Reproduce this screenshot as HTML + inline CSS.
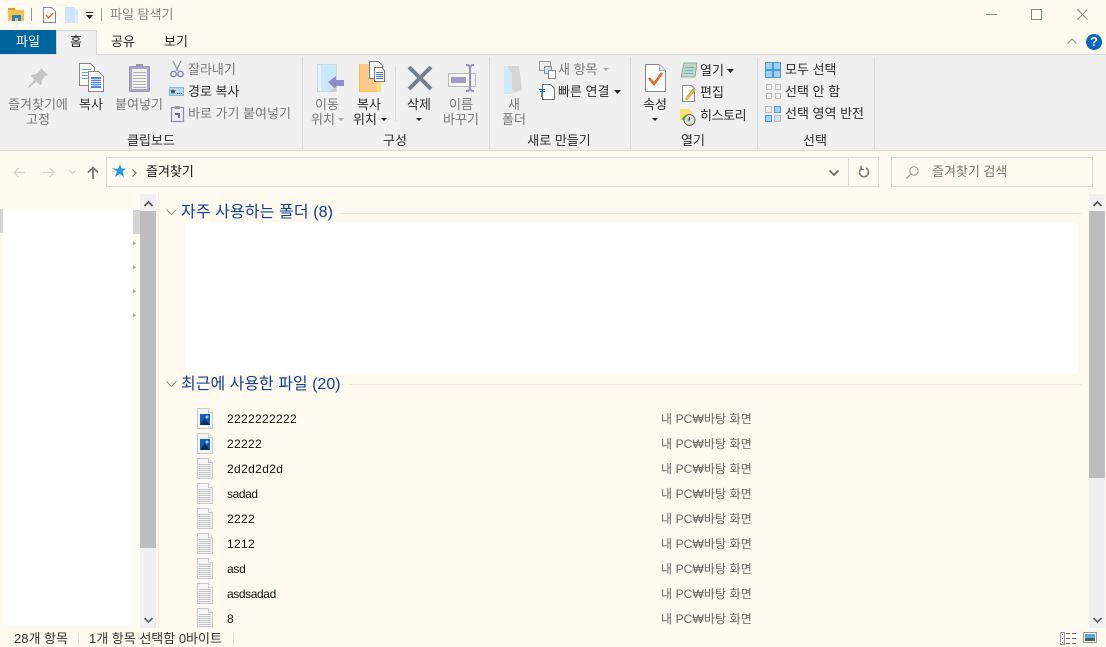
<!DOCTYPE html>
<html lang="ko"><head><meta charset="utf-8"><title>파일 탐색기</title>
<style>
html,body{margin:0;padding:0}
body{width:1106px;height:646px;overflow:hidden;background:#fffaf0;position:relative;font-family:"Liberation Sans","Noto Sans CJK KR",sans-serif;font-size:13px;color:#333}
.a{position:absolute}
.t{position:absolute;white-space:nowrap;line-height:16px;height:16px;margin-top:1px}
.c{text-align:center;transform:translateX(-50%)}
.g{color:#777}
.k{color:#2c2c2c}
svg{position:absolute;overflow:visible}
.h{position:absolute;white-space:nowrap;font-size:16px;line-height:20px;color:#0f3f9c;letter-spacing:.1px}
.f{position:absolute;left:227px;font-size:12px;line-height:16px;color:#111}
.l{position:absolute;left:661px;font-size:12px;line-height:16px;color:#666;white-space:nowrap;letter-spacing:.1px}
</style></head><body>

<!-- title bar -->
<svg style="left:8px;top:7px" width="17" height="15" viewBox="0 0 17 15"><path d="M0 1h7l1 2h8v11H0z" fill="#f5c04e"/><path d="M0 1h7v2H0z" fill="#c9a33a"/><path d="M4 14V8h9v6h-3v-3H7v3z" fill="#1c86c8"/></svg>
<div class="a" style="left:31px;top:8px;width:1px;height:13px;background:#999"></div>
<svg style="left:43px;top:7px" width="13" height="16" viewBox="0 0 13 16"><path d="M.5.5h8l4 4v11H.5z" fill="#fff" stroke="#8a8a8a"/><path d="M3 8l2.5 3L10 6" fill="none" stroke="#e8642a" stroke-width="1.5"/></svg>
<svg style="left:65px;top:7px" width="13" height="16" viewBox="0 0 13 16"><path d="M0 0h9l4 4v12H0z" fill="#cde6fb"/><path d="M10 8h3v8h-3z" fill="#e4eef6"/></svg>
<svg style="left:85px;top:12px" width="9" height="8" viewBox="0 0 9 8"><path d="M1 0h7v1H1z" fill="#222"/><path d="M1 3h7L4.5 7z" fill="#222"/></svg>
<div class="a" style="left:101px;top:8px;width:1px;height:13px;background:#999"></div>
<div class="t" style="left:110px;top:6px;color:#888">파일 탐색기</div>
<div class="a" style="left:986px;top:14px;width:11px;height:1px;background:#888"></div>
<div class="a" style="left:1031px;top:9px;width:9px;height:9px;border:1px solid #888"></div>
<svg style="left:1077px;top:9px" width="11" height="11" viewBox="0 0 11 11"><path d="M.5.5l10 10M10.500.5l-10 10" stroke="#888" fill="none"/></svg>

<!-- tabs -->
<div class="a" style="left:0;top:30px;width:56px;height:24px;background:#00659c"></div>
<div class="t c" style="left:28px;top:33px;color:#fff">파일</div>
<div class="a" style="left:56px;top:30px;width:39px;height:24px;background:#f0f0f0;border:1px solid #d8d8d8;border-bottom:0;box-sizing:content-box"></div>
<div class="t c" style="left:76px;top:33px;color:#222">홈</div>
<div class="t c" style="left:123px;top:33px;color:#222">공유</div>
<div class="t c" style="left:176px;top:33px;color:#222">보기</div>
<svg style="left:1067px;top:38px" width="10" height="6" viewBox="0 0 10 6"><path d="M.5 5.5L5 1l4.500 4.500" stroke="#999" fill="none" stroke-width="1.200"/></svg>
<div class="a" style="left:1086px;top:34px;width:16px;height:16px;border-radius:50%;background:#0a64c2;color:#fff;font:bold 13px/16px 'Liberation Sans',sans-serif;text-align:center">?</div>

<!-- ribbon -->
<div class="a" style="left:0;top:54px;width:1106px;height:97px;background:#f0f0f0;border-top:1px solid #dadada;border-bottom:1px solid #dadada;box-sizing:border-box"></div>
<div class="a" style="left:56px;top:53px;width:39px;height:2px;background:#f0f0f0;border-left:1px solid #d8d8d8;border-right:1px solid #d8d8d8"></div>
<div class="a" style="left:302px;top:57px;width:1px;height:92px;background:#dcdcdc"></div>
<div class="a" style="left:489px;top:57px;width:1px;height:92px;background:#dcdcdc"></div>
<div class="a" style="left:630px;top:57px;width:1px;height:92px;background:#dcdcdc"></div>
<div class="a" style="left:757px;top:57px;width:1px;height:92px;background:#dcdcdc"></div>
<div class="a" style="left:874px;top:57px;width:1px;height:92px;background:#dcdcdc"></div>
<div class="a" style="left:395px;top:66px;width:1px;height:55px;background:#dcdcdc"></div>

<!-- clipboard icons -->
<svg style="left:27px;top:67px" width="22" height="22" viewBox="0 0 22 22"><path d="M14 1l7 7-3 1-3 4-.5 4-1.500 1-3.500-3.500L2 21l-1-1 6.500-7.500L4 9l1-1.500 4-.5 4-3z" fill="#c4c4c4"/></svg>
<svg style="left:79px;top:63px" width="26" height="30" viewBox="0 0 26 30"><path d="M.5.5h11l4 4v18H.5z" fill="#fff" stroke="#888"/><path d="M3 6.500h9M3 9.500h6M3 12.500h6M3 15.500h6" stroke="#6a9ae0"/><path d="M9.500 8.500h10l5 5v15h-15z" fill="#fff" stroke="#888"/><path d="M12 14h10v11H12z" fill="#4f86e8"/><path d="M12 16.500h10M12 18.500h10M12 20.500h10M12 22.500h10" stroke="#cfe0fa"/></svg>
<svg style="left:129px;top:63px" width="21" height="29" viewBox="0 0 21 29"><rect x=".5" y="3.500" width="20" height="25" rx="1" fill="#a8a4cc" stroke="#9a96c0"/><path d="M3 6h15v20H3z" fill="#f0efe8"/><path d="M4 9.500h13M4 12.500h13M4 15.500h13M4 18.500h13M4 21.500h13M4 24.500h13" stroke="#b4b4b4"/><path d="M7 3h7V1H7z" fill="#9a9a9a"/></svg>
<div class="t c g" style="left:38px;top:96px">즐겨찾기에</div>
<div class="t c g" style="left:38px;top:111px">고정</div>
<div class="t c k" style="left:91px;top:96px">복사</div>
<div class="t c g" style="left:139px;top:96px">붙여넣기</div>
<svg style="left:170px;top:61px" width="14" height="17" viewBox="0 0 14 17"><path d="M3 0l5 10M11 0L6 10" stroke="#999" stroke-width="1.300" fill="none"/><circle cx="3.500" cy="13" r="2.700" fill="none" stroke="#7d7fb8" stroke-width="1.400"/><circle cx="10.500" cy="13" r="2.700" fill="none" stroke="#7d7fb8" stroke-width="1.400"/></svg>
<div class="t g" style="left:188px;top:61px">잘라내기</div>
<svg style="left:169px;top:87px" width="15" height="9" viewBox="0 0 15 9"><path d="M.5.5h14v8H.5z" fill="#b5dcf3" stroke="#8fb8d6"/><path d="M2 3l1 3 1-3 1 3 1-3" stroke="#222" fill="none" stroke-width=".8"/><path d="M8 6.500h1M10 6.500h1M12 6.500h1" stroke="#222"/></svg>
<div class="t k" style="left:188px;top:83px">경로 복사</div>
<svg style="left:171px;top:106px" width="13" height="16" viewBox="0 0 13 16"><rect x=".5" y="1.500" width="12" height="14" fill="#eee" stroke="#8f8cba" stroke-width="1.300"/><path d="M4 0h5v3H4z" fill="#999"/><path d="M4 7h5v5H7V9H4z" fill="#6a68a8"/></svg>
<div class="t g" style="left:188px;top:105px">바로 가기 붙여넣기</div>
<div class="t c k" style="left:151px;top:132px">클립보드</div>

<!-- organize icons -->
<svg style="left:317px;top:64px" width="28" height="30" viewBox="0 0 28 30"><path d="M0 0h20v28H0z" fill="#cbe8fb"/><path d="M0 0h4v28H0z" fill="#e2f2fc"/><path d="M.5.5h19v27H.5z" fill="none" stroke="#cfd8de"/><path d="M11 18l8-6v4h8v6h-8v4z" fill="#8f8fc6"/><path d="M19 23v5h-8z" fill="#ccc"/></svg>
<svg style="left:359px;top:61px" width="27" height="32" viewBox="0 0 27 32"><path d="M0 3h22v28H0z" fill="#fdc88c"/><path d="M0 3h1v28H0zM0 30h22v1H0z" fill="#f2c832"/><path d="M18 20h4v11h-4z" fill="#f5e27a"/><path d="M10.500 5.500V.5h9l4 4v13h-13z" fill="#fff" stroke="#777"/><path d="M15.500 6.500h7l3 3v11h-10z" fill="#fff" stroke="#777"/><path d="M17 11.500h7M17 13.500h7M17 15.500h7M17 17.500h7" stroke="#3f7de0"/></svg>
<svg style="left:407px;top:65px" width="26" height="26" viewBox="0 0 26 26"><path d="M2 2l22 22M24 2L2 24" stroke="#74808f" stroke-width="4" fill="none"/></svg>
<svg style="left:448px;top:64px" width="29" height="28" viewBox="0 0 29 28"><path d="M.5 9.500h27v13H.5z" fill="#f6f6f6" stroke="#bbb"/><path d="M3 13h15v6H3z" fill="#9d9cca"/><path d="M22 2v24M18 1h2l2 2 2-2h2M18 27h2l2-2 2 2h2" stroke="#9493c4" stroke-width="2" fill="none"/></svg>
<div class="t c g" style="left:327px;top:96px">이동</div>
<div class="t g" style="left:311px;top:111px">위치</div>
<svg style="left:338px;top:118px" width="6" height="3" viewBox="0 0 6 3"><path d="M0 0h6L3 3z" fill="#aaa"/></svg>
<div class="t c k" style="left:369px;top:96px">복사</div>
<div class="t k" style="left:353px;top:111px">위치</div>
<svg style="left:381px;top:118px" width="6" height="3" viewBox="0 0 6 3"><path d="M0 0h6L3 3z" fill="#222"/></svg>
<div class="t c k" style="left:419px;top:96px">삭제</div>
<svg style="left:416px;top:118px" width="6" height="3" viewBox="0 0 6 3"><path d="M0 0h6L3 3z" fill="#222"/></svg>
<div class="t c g" style="left:461px;top:96px">이름</div>
<div class="t c g" style="left:461px;top:111px">바꾸기</div>
<div class="t c k" style="left:395px;top:132px">구성</div>

<!-- new -->
<svg style="left:504px;top:66px" width="19" height="28" viewBox="0 0 19 28"><path d="M0 0l6 1 3 27H0z" fill="#cbe8fb"/><path d="M4 0h11l3 24-9 3z" fill="#d5d5d5"/><path d="M0 0l8 6v21l-8 1z" fill="#cfe9fb"/></svg>
<svg style="left:539px;top:61px" width="17" height="18" viewBox="0 0 17 18"><path d="M.5.5h11v9H.5z" fill="#eee" stroke="#9a9a9a"/><path d="M5.500 5.500h7v7h-7z" fill="#cfe3f5" stroke="#8a8a8a"/><path d="M9.500 9.500h7v8h-7z" fill="#fff" stroke="#8a8a8a"/></svg>
<div class="t g" style="left:558px;top:61px">새 항목</div>
<svg style="left:603px;top:68px" width="6" height="3" viewBox="0 0 6 3"><path d="M0 0h6L3 3z" fill="#aaa"/></svg>
<svg style="left:539px;top:84px" width="16" height="16" viewBox="0 0 16 16"><path d="M3.500.5h8l4 4v11h-12z" fill="#fff" stroke="#777"/><path d="M0 5.500h6M1 7.500h5" stroke="#06a" fill="none"/><path d="M3.500 5L2.500 13" stroke="#06a"/></svg>
<div class="t k" style="left:558px;top:83px">빠른 연결</div>
<svg style="left:614px;top:90px" width="7" height="4" viewBox="0 0 7 4"><path d="M0 0h7L3.500 4z" fill="#222"/></svg>
<div class="t c g" style="left:514px;top:96px">새</div>
<div class="t c g" style="left:514px;top:111px">폴더</div>
<div class="t c k" style="left:559px;top:132px">새로 만들기</div>

<!-- open -->
<svg style="left:645px;top:64px" width="21" height="28" viewBox="0 0 21 28"><path d="M.5.5h14l6 6v21H.5z" fill="#fff" stroke="#888"/><path d="M14.500.5v6h6" fill="#eee" stroke="#aaa"/><path d="M4 14l5 6 8-11" stroke="#ef5f1f" stroke-width="2.500" fill="none"/></svg>
<div class="t c k" style="left:655px;top:96px">속성</div>
<svg style="left:652px;top:118px" width="6" height="3" viewBox="0 0 6 3"><path d="M0 0h6L3 3z" fill="#222"/></svg>
<svg style="left:681px;top:62px" width="16" height="16" viewBox="0 0 16 16"><path d="M3 1h13l-2 14H0z" fill="#bcd9c4" stroke="#7d9c92" stroke-width=".8"/><path d="M4 5.500h9M4 8.500h8M3 11.500h9" stroke="#7aa9c9"/></svg>
<div class="t k" style="left:700px;top:62px">열기</div>
<svg style="left:727px;top:69px" width="7" height="4" viewBox="0 0 7 4"><path d="M0 0h7L3.500 4z" fill="#222"/></svg>
<svg style="left:682px;top:85px" width="15" height="17" viewBox="0 0 15 17"><path d="M.5.5h9l3 3v13H.5z" fill="#fff" stroke="#888"/><path d="M13 5L6 14l-2 1 0-2 7-9z" fill="#f5c43f" stroke="#c7922a" stroke-width=".7"/></svg>
<div class="t k" style="left:700px;top:84px">편집</div>
<svg style="left:680px;top:109px" width="16" height="17" viewBox="0 0 16 17"><path d="M0 0h9l3 3v8H0z" fill="#f8e06c"/><circle cx="9.500" cy="11" r="5.500" fill="#ddd" stroke="#666"/><path d="M3 11a6 6 0 0 1 3-4" stroke="#4aa02c" stroke-width="2" fill="none"/><path d="M9.500 8v3h-2" stroke="#333" fill="none"/></svg>
<div class="t k" style="left:700px;top:107px;letter-spacing:-.4px">히스토리</div>
<div class="t c k" style="left:693px;top:132px">열기</div>

<!-- select -->
<svg style="left:765px;top:62px" width="16" height="16" viewBox="0 0 16 16"><path d="M0 0h16v16H0z" fill="#3f9de8"/><path d="M1 1h6v6H1zM9 1h6v6H9zM1 9h6v6H1zM9 9h6v6H9z" fill="#a9cdea"/></svg>
<div class="t k" style="left:785px;top:61px">모두 선택</div>
<svg style="left:766px;top:84px" width="15" height="15" viewBox="0 0 15 15"><path d="M.5.5h5v5h-5zM9.500.5h5v5h-5zM.5 9.500h5v5h-5zM9.500 9.500h5v5h-5z" fill="none" stroke="#bbb"/></svg>
<div class="t k" style="left:785px;top:83px">선택 안 함</div>
<svg style="left:765px;top:106px" width="16" height="16" viewBox="0 0 16 16"><path d="M.5.5h6v6h-6z" fill="none" stroke="#bbb"/><path d="M9 0h7v7H9zM0 9h7v7H0z" fill="#3f9de8"/><path d="M10 1h5v5h-5zM1 10h5v5H1z" fill="#a9cdea"/><path d="M9.500 9.500h6v6h-6z" fill="#cfe3f5" stroke="#bbb"/></svg>
<div class="t k" style="left:785px;top:105px">선택 영역 반전</div>
<div class="t c k" style="left:815px;top:132px">선택</div>

<!-- nav bar -->
<svg style="left:13px;top:167px" width="13" height="11" viewBox="0 0 13 11"><path d="M12 5.500H1M5.500 1L1 5.500 5.500 10" stroke="#d4d4d4" fill="none" stroke-width="1.300"/></svg>
<svg style="left:42px;top:167px" width="13" height="11" viewBox="0 0 13 11"><path d="M1 5.500h11M7.500 1L12 5.500 7.500 10" stroke="#d4d4d4" fill="none" stroke-width="1.300"/></svg>
<svg style="left:69px;top:170px" width="7" height="4" viewBox="0 0 7 4"><path d="M.5.5l3 3 3-3" stroke="#ccc" fill="none"/></svg>
<svg style="left:87px;top:166px" width="12" height="13" viewBox="0 0 12 13"><path d="M6 13V1.500M1 6.500l5-5 5 5" stroke="#777" fill="none" stroke-width="1.800"/></svg>
<div class="a" style="left:106px;top:157px;width:671px;height:28px;border:1px solid #d9d9d9;border-right:0"></div>
<div class="a" style="left:848px;top:157px;width:29px;height:28px;border:1px solid #d9d9d9"></div>
<div class="a" style="left:777px;top:157px;width:71px;height:28px;border-top:1px solid #d9d9d9;border-bottom:1px solid #d9d9d9"></div>
<svg style="left:112px;top:164px" width="14" height="14" viewBox="0 0 14 14"><path d="M8 0l1.500 4.500H14l-3.500 3L12 13 8 10l-5 3 2-5.500L1 5h5z" fill="#1e9be8"/><path d="M0 4.500h3M0 7.500h2" stroke="#9cc"/></svg>
<svg style="left:132px;top:169px" width="5" height="8" viewBox="0 0 5 8"><path d="M.5.5l3.500 3.500-3.500 3.500" stroke="#666" fill="none" stroke-width="1.200"/></svg>
<div class="t" style="left:146px;top:163px;color:#111">즐겨찾기</div>
<svg style="left:829px;top:170px" width="10" height="6" viewBox="0 0 10 6"><path d="M.5.5L5 5 9.500.5" stroke="#666" fill="none" stroke-width="1.600"/></svg>
<svg style="left:859px;top:165px" width="11" height="13" viewBox="0 0 11 13"><path d="M3 3.200a4.500 4.500 0 1 0 4 0" stroke="#777" fill="none" stroke-width="1.500"/><path d="M2 .5v4h3" stroke="#777" fill="none" stroke-width="1.300"/></svg>
<div class="a" style="left:891px;top:157px;width:200px;height:28px;border:1px solid #d9d9d9"></div>
<svg style="left:906px;top:166px" width="13" height="13" viewBox="0 0 13 13"><circle cx="8" cy="5" r="4.200" fill="none" stroke="#999"/><path d="M5 8l-4.500 4.500" stroke="#999" stroke-width="1.200"/></svg>
<div class="t" style="left:932px;top:163px;color:#777">즐겨찾기 검색</div>

<!-- nav pane -->
<div class="a" style="left:3px;top:209px;width:130px;height:417px;background:#fff"></div>
<div class="a" style="left:0;top:209px;width:3px;height:24px;background:#d4d4d4"></div>
<div class="a" style="left:133px;top:210px;width:7px;height:24px;background:#d4d4d4"></div>
<svg style="left:133px;top:241px" width="4" height="80" viewBox="0 0 4 80"><path d="M0 0l3 2.500L0 5zM0 24l3 2.500L0 29zM0 48l3 2.500L0 53zM0 72l3 2.500L0 77z" fill="#a8a8a8"/></svg>
<div class="a" style="left:140px;top:194px;width:16px;height:434px;background:#f0f0f0"></div>
<div class="a" style="left:140px;top:211px;width:16px;height:337px;background:#bdbdbd"></div>
<svg style="left:144px;top:201px" width="9" height="6" viewBox="0 0 9 6"><path d="M.5 5L4.500 1l4 4" stroke="#555" fill="none" stroke-width="1.800"/></svg>
<svg style="left:144px;top:617px" width="9" height="6" viewBox="0 0 9 6"><path d="M.5 1l4 4 4-4" stroke="#666" fill="none" stroke-width="1.800"/></svg>
<div class="a" style="left:158px;top:194px;width:1px;height:434px;background:#f0ece2"></div>

<!-- main -->
<svg style="left:166px;top:209px" width="11" height="6" viewBox="0 0 11 6"><path d="M.5.5l5 5 5-5" stroke="#888" fill="none"/></svg>
<div class="h" style="left:181px;top:203px">자주 사용하는 폴더 (8)</div>
<div class="a" style="left:340px;top:213px;width:741px;height:1px;background:#ece7d8"></div>
<div class="a" style="left:185px;top:222px;width:893px;height:152px;background:#fff"></div>
<svg style="left:166px;top:381px" width="11" height="6" viewBox="0 0 11 6"><path d="M.5.5l5 5 5-5" stroke="#888" fill="none"/></svg>
<div class="h" style="left:181px;top:375px;letter-spacing:0">최근에 사용한 파일 (20)</div>
<div class="a" style="left:349px;top:384px;width:732px;height:1px;background:#ece7d8"></div>

<div class="a" style="left:1089px;top:194px;width:16px;height:434px;background:#f0f0f0"></div>
<div class="a" style="left:1089px;top:211px;width:16px;height:267px;background:#bdbdbd"></div>
<svg style="left:1093px;top:201px" width="9" height="6" viewBox="0 0 9 6"><path d="M.5 5L4.500 1l4 4" stroke="#555" fill="none" stroke-width="1.800"/></svg>
<svg style="left:1093px;top:617px" width="9" height="6" viewBox="0 0 9 6"><path d="M.5 1l4 4 4-4" stroke="#666" fill="none" stroke-width="1.800"/></svg>

<!-- file icons -->
<svg width="0" height="0" style="position:absolute"><defs>
<g id="im"><path d="M.5.5h11l4 4v16H.5z" fill="#f4f4f4" stroke="#c8c8c8"/><path d="M11.500.5v4h4" fill="#fff" stroke="#c8c8c8"/><path d="M3 6h10v11H3z" fill="#0e5fb4"/><circle cx="10" cy="9" r="1.500" fill="#8fd0f5"/><path d="M3 17l4.500-7 5.500 7z" fill="#07305f"/></g>
<g id="tx"><path d="M.5.5h11l4 4v16H.5z" fill="#f6f6f6" stroke="#c8c8c8"/><path d="M11.500.5v4h4" fill="#fff" stroke="#c8c8c8"/><path d="M2 6.500h12M2 8.500h12M2 10.500h12M2 12.500h12M2 14.500h12M2 16.500h12M2 18.500h12" stroke="#c4c4c4"/></g>
</defs></svg>
<svg style="left:197px;top:408px" width="16" height="21"><use href="#im"/></svg>
<svg style="left:197px;top:433px" width="16" height="21"><use href="#im"/></svg>
<svg style="left:197px;top:458px" width="16" height="21"><use href="#tx"/></svg>
<svg style="left:197px;top:483px" width="16" height="21"><use href="#tx"/></svg>
<svg style="left:197px;top:508px" width="16" height="21"><use href="#tx"/></svg>
<svg style="left:197px;top:533px" width="16" height="21"><use href="#tx"/></svg>
<svg style="left:197px;top:558px" width="16" height="21"><use href="#tx"/></svg>
<svg style="left:197px;top:583px" width="16" height="21"><use href="#tx"/></svg>
<svg style="left:197px;top:608px" width="16" height="20" viewBox="0 0 16 20"><use href="#tx"/></svg>

<div class="f" style="top:411px;letter-spacing:.33px">2222222222</div><div class="l" style="top:411px">내 PC₩바탕 화면</div>
<div class="f" style="top:436px;letter-spacing:.33px">22222</div><div class="l" style="top:436px">내 PC₩바탕 화면</div>
<div class="f" style="top:461px;letter-spacing:.37px">2d2d2d2d</div><div class="l" style="top:461px">내 PC₩바탕 화면</div>
<div class="f" style="top:486px;letter-spacing:-.4px">sadad</div><div class="l" style="top:486px">내 PC₩바탕 화면</div>
<div class="f" style="top:511px;letter-spacing:.33px">2222</div><div class="l" style="top:511px">내 PC₩바탕 화면</div>
<div class="f" style="top:536px;letter-spacing:.33px">1212</div><div class="l" style="top:536px">내 PC₩바탕 화면</div>
<div class="f" style="top:561px;letter-spacing:-.3px">asd</div><div class="l" style="top:561px">내 PC₩바탕 화면</div>
<div class="f" style="top:586px;letter-spacing:-.4px">asdsadad</div><div class="l" style="top:586px">내 PC₩바탕 화면</div>
<div class="f" style="top:611px">8</div><div class="l" style="top:611px">내 PC₩바탕 화면</div>

<!-- status bar -->
<div class="a" style="left:0;top:628px;width:1106px;height:18px;background:#fffaf0"></div>
<div class="t" style="left:14px;top:630px;color:#333">28개 항목</div>
<div class="a" style="left:78px;top:633px;width:1px;height:12px;background:#e6e2d8"></div>
<div class="t" style="left:89px;top:630px;color:#333">1개 항목 선택함 0바이트</div>
<div class="a" style="left:233px;top:633px;width:1px;height:12px;background:#e6e2d8"></div>
<svg style="left:1060px;top:632px" width="17" height="13" viewBox="0 0 17 13"><path d="M.5.5h4v12h-4z" fill="#fff" stroke="#999"/><path d="M2 2h1v1H2z" fill="#4a4"/><path d="M2 6h1v1H2z" fill="#48d"/><path d="M2 10h1v1H2z" fill="#d33"/><path d="M6 1.500h4M12 1.500h4M6 6.500h4M12 6.500h4M6 11.500h4M12 11.500h4" stroke="#666"/></svg>
<svg style="left:1083px;top:632px" width="14" height="12" viewBox="0 0 14 12"><path d="M.5.5h13v10H.5z" fill="#fff" stroke="#999"/><path d="M2 2h10v7H2z" fill="#5aa8e8"/><path d="M2 6h10v3H2z" fill="#3c6b4a"/></svg>
</body></html>
